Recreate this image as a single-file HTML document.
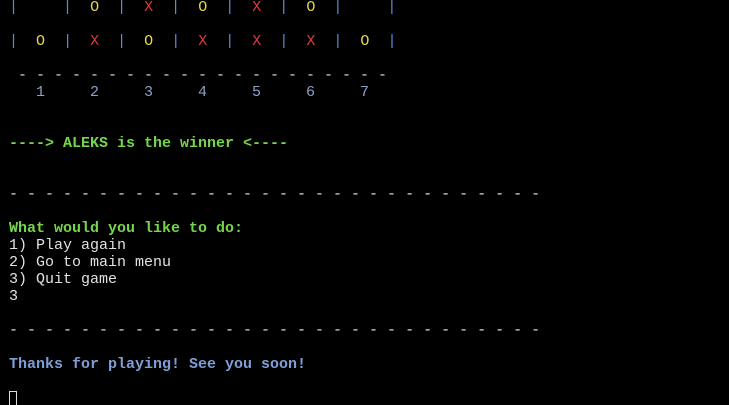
<!DOCTYPE html>
<html><head><style>
html,body{margin:0;padding:0;background:#000;width:729px;height:405px;overflow:hidden}
pre{margin:0;padding:0 0 0 9px;font-family:"Liberation Mono",monospace;font-size:15px;line-height:17px;color:#e2e2e2;position:relative;top:-1px}
.b{color:#5a8cd8}.o{color:#e8d84c}.x{color:#e03a3a}.n{color:#8da2c6}.g{color:#74d64a;font-weight:bold}.t{color:#7d9fd6;font-weight:bold}.d{color:#d8d8d8}
.c{display:inline-block;width:8px;height:15px;border:1px solid #ddd;vertical-align:-4px;box-sizing:border-box}
</style></head><body><pre><span class="b">|</span>     <span class="b">|</span>  <span class="o">O</span>  <span class="b">|</span>  <span class="x">X</span>  <span class="b">|</span>  <span class="o">O</span>  <span class="b">|</span>  <span class="x">X</span>  <span class="b">|</span>  <span class="o">O</span>  <span class="b">|</span>     <span class="b">|</span>

<span class="b">|</span>  <span class="o">O</span>  <span class="b">|</span>  <span class="x">X</span>  <span class="b">|</span>  <span class="o">O</span>  <span class="b">|</span>  <span class="x">X</span>  <span class="b">|</span>  <span class="x">X</span>  <span class="b">|</span>  <span class="x">X</span>  <span class="b">|</span>  <span class="o">O</span>  <span class="b">|</span>

<span class="d"> - - - - - - - - - - - - - - - - - - - - -</span>
<span class="n">   1     2     3     4     5     6     7</span>


<span class="g">----&gt; ALEKS is the winner &lt;----</span>


- - - - - - - - - - - - - - - - - - - - - - - - - - - - - -

<span class="g">What would you like to do:</span>
1) Play again
2) Go to main menu
3) Quit game
3

- - - - - - - - - - - - - - - - - - - - - - - - - - - - - -

<span class="t">Thanks for playing! See you soon!</span>

<span class="c"></span></pre></body></html>
